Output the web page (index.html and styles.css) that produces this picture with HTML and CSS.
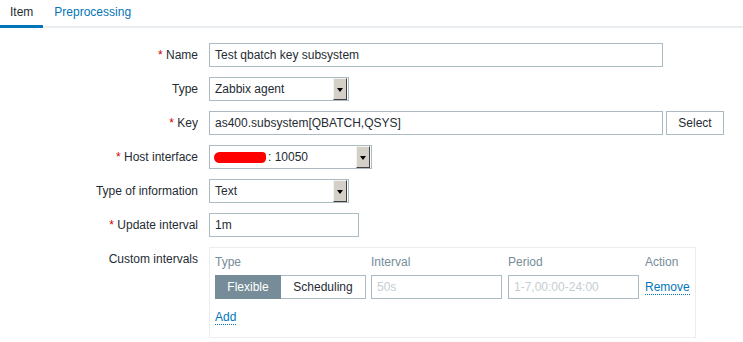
FILE: index.html
```html
<!DOCTYPE html>
<html>
<head>
<meta charset="utf-8">
<link rel="stylesheet" href="styles.css">
</head>
<body>
<div class="tabs">
  <div class="tab active">Item</div>
  <div class="tab">Preprocessing</div>
</div>
<div class="form">
  <div class="row">
    <label class="lbl"><span class="req">*</span> Name</label>
    <div class="field"><div class="input w-full">Test qbatch key subsystem</div></div>
  </div>
  <div class="row">
    <label class="lbl">Type</label>
    <div class="field"><div class="select w-type"><span>Zabbix agent</span><span class="arrow"></span></div></div>
  </div>
  <div class="row">
    <label class="lbl"><span class="req">*</span> Key</label>
    <div class="field"><div class="input w-full">as400.subsystem[QBATCH,QSYS]</div><button class="btn">Select</button></div>
  </div>
  <div class="row">
    <label class="lbl"><span class="req">*</span> Host interface</label>
    <div class="field"><div class="select w-host"><span class="host"><span class="blot"></span>: 10050</span><span class="arrow"></span></div></div>
  </div>
  <div class="row">
    <label class="lbl">Type of information</label>
    <div class="field"><div class="select w-type"><span>Text</span><span class="arrow"></span></div></div>
  </div>
  <div class="row">
    <label class="lbl"><span class="req">*</span> Update interval</label>
    <div class="field"><div class="input w-upd">1m</div></div>
  </div>
  <div class="row">
    <label class="lbl lbl-top">Custom intervals</label>
    <div class="field">
      <div class="box">
        <div class="grid">
          <div class="th">Type</div>
          <div class="th">Interval</div>
          <div class="th">Period</div>
          <div class="th">Action</div>
          <div class="seg"><span class="seg-on">Flexible</span><span class="seg-off">Scheduling</span></div>
          <div class="input ph">50s</div>
          <div class="input ph">1-7,00:00-24:00</div>
          <div class="link-cell"><a class="link">Remove</a></div>
        </div>
        <a class="link add">Add</a>
      </div>
    </div>
  </div>
</div>
</body>
</html>
```
FILE: styles.css
```css
* { box-sizing: border-box; }
body {
  margin: 0;
  background: #fff;
  font-family: "Liberation Sans", Arial, sans-serif;
  font-size: 12px;
  color: #1f2c33;
}
.tabs {
  display: flex;
  height: 28px;
  border-bottom: 2px solid #ebeef0;
}
.tab {
  padding: 5px 10px 0 10px;
  height: 28px;
  color: #0275b8;
  font-size: 12px;
}
.tab.active {
  color: #1f2c33;
  border-bottom: 3px solid #0275b8;
  margin-bottom: -2px;
  padding: 5px 10px 0 10px;
}
.tab + .tab { padding-left: 11px; }
.form {
  padding-top: 15px;
  display: flex;
  flex-direction: column;
  gap: 10px;
}
.row {
  display: flex;
  align-items: flex-start;
}
.lbl {
  width: 199px;
  text-align: right;
  line-height: 24px;
  padding-right: 1px;
  white-space: nowrap;
}
.lbl-top { line-height: 14px; padding-top: 5px; }
.req { color: #d40000; }
.field {
  margin-left: 10px;
  display: flex;
  gap: 3px;
}
.input {
  height: 24px;
  border: 1px solid #acbbc2;
  background: #fff;
  padding: 0 5px;
  line-height: 22px;
  white-space: nowrap;
  overflow: hidden;
}
.w-full { width: 454px; }
.w-upd { width: 150px; }
.btn {
  height: 24px;
  width: 58px;
  border: 1px solid #acbbc2;
  background: #fff;
  font-family: inherit;
  font-size: 12px;
  color: #1f2c33;
  padding: 0;
}
.select {
  height: 24px;
  border: 1px solid #acbbc2;
  background: #fff;
  display: flex;
  align-items: center;
  justify-content: space-between;
  padding: 0 1px 0 5px;
}
.w-type { width: 140px; }
.w-host { width: 163px; }
.arrow {
  width: 14px;
  height: 22px;
  background: #d4d0c8;
  border-top: 1px solid #f4f3ef;
  border-left: 1px solid #f4f3ef;
  border-right: 1px solid #404040;
  border-bottom: 1px solid #404040;
  position: relative;
}
.arrow::after {
  content: "";
  position: absolute;
  left: 3px;
  top: 9px;
  border-left: 3px solid transparent;
  border-right: 3px solid transparent;
  border-top: 4px solid #000;
}
.host { display: flex; align-items: center; }
.blot {
  display: inline-block;
  width: 52px;
  height: 11px;
  background: #f00;
  border-radius: 6px 4px 5px 6px;
  margin-left: -1px;
  margin-right: 2px;
}
.box {
  width: 487px;
  border: 1px solid #ebeef0;
  padding: 6px 5px 12px 5px;
}
.grid {
  display: grid;
  grid-template-columns: 150px 131px 131px auto;
  column-gap: 6px;
  row-gap: 4px;
}
.th {
  color: #768d99;
  line-height: 16px;
  height: 17px;
}
.seg {
  display: flex;
  height: 24px;
  border: 1px solid #acbbc2;
  width: 151px;
}
.seg-on {
  width: 66px;
  background: #768d99;
  color: #fff;
  text-align: center;
  margin: -1px 0 -1px -1px;
  height: 24px;
  line-height: 24px;
}
.seg-off {
  flex: 1;
  text-align: center;
  line-height: 22px;
}
.ph { color: #c4ced3; }
.link-cell { line-height: 24px; }
.link {
  color: #0275b8;
  border-bottom: 1px dotted #0275b8;
  line-height: 14px;
  display: inline-block;
}
.add { margin-top: 11px; }
```
